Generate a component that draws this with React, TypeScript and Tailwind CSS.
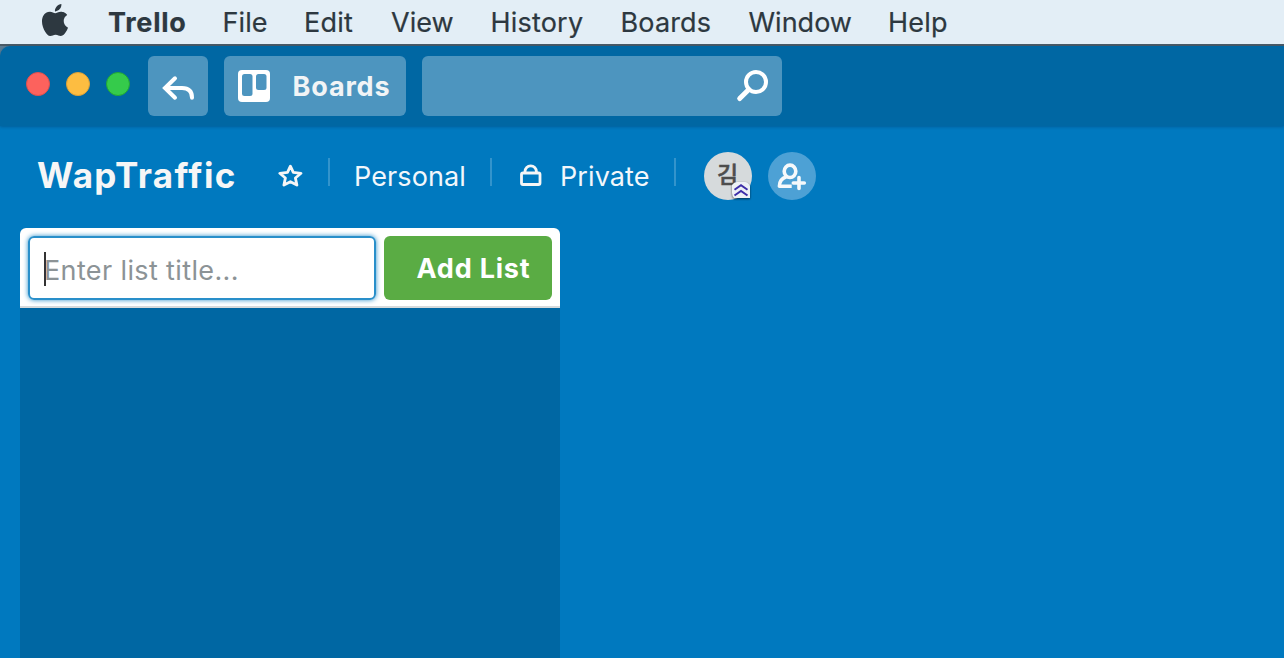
import { SiApple } from "react-icons/si";

const menus = [
  { label: "File", cls: "w-[81.5px] tracking-[0.1px]" },
  { label: "Edit", cls: "w-[87px] tracking-[0.2px]" },
  { label: "View", cls: "w-[99.5px]" },
  { label: "History", cls: "w-[130px] tracking-[0.2px]" },
  { label: "Boards", cls: "w-[128px] tracking-[0.15px]" },
  { label: "Window", cls: "w-[139.5px]" },
  { label: "Help", cls: "w-[80px] tracking-[0.2px]" },
];

function MenuBar() {
  return (
    <nav className="flex h-[46px] items-center whitespace-nowrap border-b-2 border-[#4a5a66] bg-[#e3eef6] text-[27px] text-[#2d3840] [-webkit-text-stroke:0.2px_#2d3840]">
      <SiApple className="mb-[5px] ml-[39px] h-[32px] w-[32px] shrink-0" />
      <span className="ml-[37px] mt-[2px] w-[114.5px] shrink-0 font-bold tracking-[0.75px]">Trello</span>
      {menus.map((m) => (
        <span key={m.label} className={`mt-[2px] shrink-0 ${m.cls}`}>
          {m.label}
        </span>
      ))}
    </nav>
  );
}

function TitleBar() {
  return (
    <div className="bg-[#5c7c93]">
      <header className="flex h-[80px] items-start rounded-tl-[10px] bg-[#0067a3] pl-[26px] pt-[10px] shadow-[0_1px_3px_rgba(0,70,120,0.5)]">
        <div className="mt-[16px] flex gap-[16px]">
          <span className="h-6 w-6 rounded-full border border-[#e2504c] bg-[#fc625d]" />
          <span className="h-6 w-6 rounded-full border border-[#dfa136] bg-[#fdbd41]" />
          <span className="h-6 w-6 rounded-full border border-[#21a735] bg-[#35cb4b]" />
        </div>
        <button className="ml-[18px] h-[60px] w-[60px] rounded-[6px] bg-[#4d95bf]">
          <svg viewBox="0 0 60 60" className="h-[60px] w-[60px]" fill="none" stroke="#fff" strokeWidth="4" strokeLinecap="round" strokeLinejoin="miter">
            <path d="M27 22.3 17 32l10 9.7" />
            <path d="M17.5 32H34c7 0 10 4 10 9.8" />
          </svg>
        </button>
        <button className="ml-4 flex h-[60px] w-[182px] items-center whitespace-nowrap rounded-[6px] bg-[#4d95bf] pl-[14px] text-[27px] font-bold tracking-[0.85px] text-[#f1f4f6]">
          <svg viewBox="0 0 32 32" className="h-8 w-8 shrink-0">
            <rect width="32" height="32" rx="4" fill="#fff" />
            <rect x="4" y="4" width="10.5" height="22" rx="2.5" fill="#4d95bf" />
            <rect x="18" y="4" width="10.5" height="16" rx="2.5" fill="#4d95bf" />
          </svg>
          <span className="ml-[22.5px] mt-[3px]">Boards</span>
        </button>
        <div className="ml-4 flex h-[60px] w-[360px] justify-end rounded-[6px] bg-[#4d95bf]">
          <svg viewBox="0 0 60 60" className="h-[60px] w-[60px]" fill="none" stroke="#fff" strokeLinecap="round">
            <circle cx="34" cy="26" r="10" strokeWidth="4" />
            <path d="m26.8 33.5-9.1 9" strokeWidth="5" />
          </svg>
        </div>
      </header>
    </div>
  );
}

function Divider() {
  return <span className="mb-2 h-7 w-[2px] shrink-0 bg-[#3394cc]" />;
}

function BoardHeader() {
  return (
    <div className="flex h-[102px] items-center whitespace-nowrap pb-[2px] pl-[37px] text-[27px] text-[#f2f7fb]">
      <h1 className="mb-[2px] w-[241px] shrink-0 text-[35px] font-bold tracking-[1.35px] text-[#f6f6f6]">WapTraffic</h1>
      <svg viewBox="0 0 26 26" className="h-[26px] w-[26px] shrink-0" fill="none" stroke="#f6f6f6" strokeWidth="2.8" strokeLinejoin="round">
        <path d="m12.4 3.2 2.9 6.2 7.7.9-5.6 4.7 1.5 7.1-6.5-3.4-6.5 3.4 1.5-7.1-5.6-4.7 7.7-.9z" />
      </svg>
      <span className="w-[24px] shrink-0" />
      <Divider />
      <span className="ml-6 mt-[2px] w-[136px] shrink-0 tracking-[0.1px]">Personal</span>
      <Divider />
      <svg viewBox="0 0 24 24" className="mb-[2px] ml-[27px] h-6 w-6 shrink-0" fill="none" stroke="#f6f6f6" strokeWidth="2.8">
        <rect x="2.5" y="10" width="18.5" height="11.5" rx="1.5" />
        <path d="M6 10V8.5a5.7 5.7 0 0 1 11.4 0V10" />
      </svg>
      <span className="ml-[17px] mt-[2px] w-[114px] shrink-0 tracking-[0.1px]">Private</span>
      <Divider />
      <div className="relative ml-7 flex h-12 w-12 shrink-0 items-center justify-center rounded-full bg-[#d6dadc]">
        <span className="mb-[5px] mr-px font-['Noto_Sans_CJK_KR',sans-serif] text-[23px] font-medium leading-none text-[#4d4d4d] [-webkit-text-stroke:0.5px_#4d4d4d]">김</span>
        <svg viewBox="0 0 18 17" className="absolute left-[28px] top-[30px] h-[17px] w-[18px] drop-shadow-[0_1px_1px_rgba(0,0,0,0.6)]">
          <path d="M0 3q2-3 5-3h8q3 0 5 4v12H2q-2-2-2-5z" fill="#edf1f5" />
          <path d="m2.5 7.7 6.5-4.5 6.5 4.5m-13 5.8L9 9l6.5 4.5" fill="none" stroke="#3d2ea8" strokeWidth="2" />
        </svg>
      </div>
      <div className="ml-4 h-12 w-12 shrink-0 rounded-full bg-[#4da1d5]">
        <svg viewBox="0 0 48 48" className="h-12 w-12" fill="none" stroke="#f6f9fb" strokeWidth="3.6">
          <ellipse cx="22" cy="19.3" rx="5.8" ry="6.2" />
          <path d="M18.3 24.8c-4.6 1.5-6.8 4.3-6.9 9.4h12.3" strokeLinejoin="round" />
          <path d="M31 25.5v11M25.3 31h11" strokeLinecap="round" />
        </svg>
      </div>
    </div>
  );
}

function AddList() {
  return (
    <div className="ml-5 flex w-[540px] grow flex-col overflow-hidden rounded-t-[6px] bg-[#0067a3]">
      <div className="flex h-[80px] shrink-0 gap-2 border-b-2 border-[#d6dadc] bg-white p-2">
        <div className="flex h-16 w-[348px] items-center rounded-[6px] border-2 border-[#298fca] pl-[14px] text-[27px] text-[#8c9396] shadow-[0_0_5px_#298fca]">
          <span className="mt-[2px] h-[34px] w-[2px] bg-[#333]" />
          <span className="-ml-[2px] mt-[6px] whitespace-nowrap tracking-[0.37px]">Enter list title...</span>
        </div>
        <button className="h-16 w-[168px] whitespace-nowrap rounded-[6px] bg-[#5aac44] pl-[32.5px] pt-[2px] text-left text-[27px] font-bold tracking-[0.8px] text-white">
          Add List
        </button>
      </div>
    </div>
  );
}

export default function App() {
  return (
    <div className="flex h-[658px] w-[1284px] flex-col overflow-hidden bg-[#0079bf] font-['Inter',sans-serif]">
      <MenuBar />
      <TitleBar />
      <BoardHeader />
      <AddList />
    </div>
  );
}
